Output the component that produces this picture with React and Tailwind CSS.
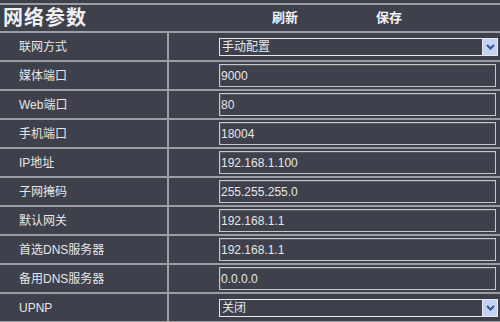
import React from "react";

const rows = [
  { label: "联网方式", type: "select", value: "手动配置" },
  { label: "媒体端口", type: "input", value: "9000" },
  { label: "Web端口", type: "input", value: "80" },
  { label: "手机端口", type: "input", value: "18004" },
  { label: "IP地址", type: "input", value: "192.168.1.100" },
  { label: "子网掩码", type: "input", value: "255.255.255.0" },
  { label: "默认网关", type: "input", value: "192.168.1.1" },
  { label: "首选DNS服务器", type: "input", value: "192.168.1.1" },
  { label: "备用DNS服务器", type: "input", value: "0.0.0.0" },
  { label: "UPNP", type: "select", value: "关闭" },
];

const font = { fontFamily: '"Liberation Sans", "Noto Sans CJK SC", sans-serif' };

const SelectBox = ({ value }) => (
  <div className="flex h-[18px] w-[279px] items-stretch border border-[#e8e8e8] bg-[#3e414c]">
    <span className="flex-1 pl-[2px] text-[12px] leading-[16px] text-[#e8e8e8]">{value}</span>
    <span className="flex w-[15px] items-center justify-center border-l border-[#e8e8e8] bg-[#c3d3f6]">
      <svg width="9" height="6" viewBox="0 0 9 6">
        <path d="M1 1l3.5 3.5L8 1" fill="none" stroke="#3b5590" strokeWidth="2" />
      </svg>
    </span>
  </div>
);

const InputBox = ({ value }) => (
  <div className="flex h-[23px] w-[277px] items-center border border-[#c8c8c8] bg-[#3e414c] px-[1px] text-[12px] text-[#e6e6e6] shadow-[inset_1px_1px_0_#55585f]">
    {value}
  </div>
);

export default function App() {
  return (
    <div className="h-[322px] w-[500px] overflow-hidden bg-[#3e414c] pt-[3px]" style={font}>
      {/* Header */}
      <div className="flex h-[30px] items-center border-y-2 border-[#9c9ea3]">
        <span className="w-[272px] pl-[3px] text-[20px] font-bold tracking-[1px] text-[#f0f0f0]">网络参数</span>
        <span className="w-[104px] text-[13px] font-bold text-[#f2f2f2]">刷新</span>
        <span className="text-[13px] font-bold text-[#f2f2f2]">保存</span>
      </div>

      {/* Rows */}
      {rows.map((row) => (
        <div key={row.label} className="flex h-[29px] border-b-2 border-[#9c9ea3]">
          <div className="flex w-[169px] items-center border-r-2 border-[#9c9ea3] pl-[19px] text-[12px] text-[#e6e6e6]">
            {row.label}
          </div>
          <div className="flex flex-1 items-center pl-[50px]">
            {row.type === "select" ? <SelectBox value={row.value} /> : <InputBox value={row.value} />}
          </div>
        </div>
      ))}
    </div>
  );
}
